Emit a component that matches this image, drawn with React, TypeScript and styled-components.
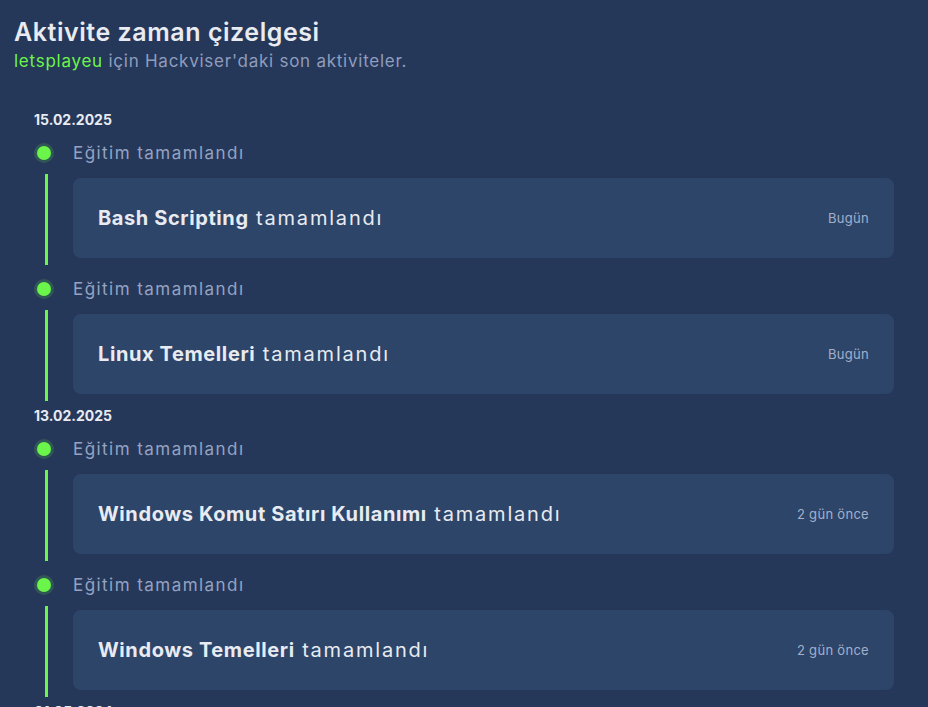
import React from "react";
import styled, { createGlobalStyle } from "styled-components";

const Global = createGlobalStyle`
  html, body { margin: 0; padding: 0; background: #263859; }
  body { font-family: "Inter", "Noto Sans", sans-serif; }
`;

const Page = styled.div`
  min-height: 707px;
  background: #263859;
  padding: 17px 34px 0 14px;
  box-sizing: border-box;
  overflow: hidden;
`;

const Title = styled.h1`
  margin: 0;
  font-size: 25px;
  line-height: 31px;
  font-weight: 600;
  letter-spacing: 0.55px;
  color: #e8ebf1;
`;

const Subtitle = styled.p`
  margin: 1px 0 0;
  font-size: 17px;
  line-height: 24px;
  letter-spacing: 0.75px;
  color: #8f9dbd;
`;

const User = styled.span`
  color: #6bf54a;
`;

const Timeline = styled.div`
  margin-top: 37px;
  padding-left: 20px;
`;

const DateLabel = styled.div`
  font-size: 14px;
  line-height: 20px;
  font-weight: 700;
  color: #e8ebf1;
  margin-bottom: 11px;
`;

const Group = styled.section``;

const Item = styled.div<{ $last?: boolean }>`
  margin-bottom: ${(p) => (p.$last ? 5 : 12)}px;
`;

const Header = styled.div`
  display: flex;
  align-items: center;
  height: 24px;
  margin-left: 3px;
`;

const Dot = styled.span`
  width: 14px;
  height: 14px;
  border-radius: 50%;
  background: #6bf54a;
  box-shadow: 0 0 0 3px rgba(107, 245, 74, 0.16);
  flex: none;
`;

const Kind = styled.span`
  margin-left: 22px;
  font-size: 17px;
  letter-spacing: 1.45px;
  color: #94a3c2;
`;

const Body = styled.div`
  display: grid;
  grid-template-columns: 3px 1fr;
  column-gap: 25px;
  margin-top: 9px;
  margin-left: 11px;
`;

const Line = styled.div`
  background: #6bf54a;
  height: 91px;
`;

const Card = styled.div`
  margin-top: 4px;
  height: 80px;
  border-radius: 8px;
  background: #2d4569;
  display: flex;
  align-items: center;
  justify-content: space-between;
  padding: 0 25px;
  box-sizing: border-box;
`;

const CardText = styled.div`
  font-size: 20px;
  color: #e8ebf1;
  font-weight: 400;
  letter-spacing: 1.8px;
`;

const Name = styled.b`
  font-weight: 700;
  letter-spacing: 0.6px;
`;

const When = styled.span`
  font-size: 13px;
  letter-spacing: 0.3px;
  color: #a3b0cc;
`;

type Entry = { name: string; when: string };
const data: { date: string; items: Entry[] }[] = [
  {
    date: "15.02.2025",
    items: [
      { name: "Bash Scripting", when: "Bugün" },
      { name: "Linux Temelleri", when: "Bugün" },
    ],
  },
  {
    date: "13.02.2025",
    items: [
      { name: "Windows Komut Satırı Kullanımı", when: "2 gün önce" },
      { name: "Windows Temelleri", when: "2 gün önce" },
    ],
  },
  { date: "01.05.2024", items: [] },
];

export default function App() {
  return (
    <Page>
      <Global />
      <Title>Aktivite zaman çizelgesi</Title>
      <Subtitle>
        <User>letsplayeu</User> için Hackviser'daki son aktiviteler.
      </Subtitle>
      <Timeline>
        {data.map((g) => (
          <Group key={g.date}>
            <DateLabel>{g.date}</DateLabel>
            {g.items.map((it, i) => (
              <Item key={it.name} $last={i === g.items.length - 1}>
                <Header>
                  <Dot />
                  <Kind>Eğitim tamamlandı</Kind>
                </Header>
                <Body>
                  <Line />
                  <Card>
                    <CardText>
                      <Name>{it.name}</Name> tamamlandı
                    </CardText>
                    <When>{it.when}</When>
                  </Card>
                </Body>
              </Item>
            ))}
          </Group>
        ))}
      </Timeline>
    </Page>
  );
}
